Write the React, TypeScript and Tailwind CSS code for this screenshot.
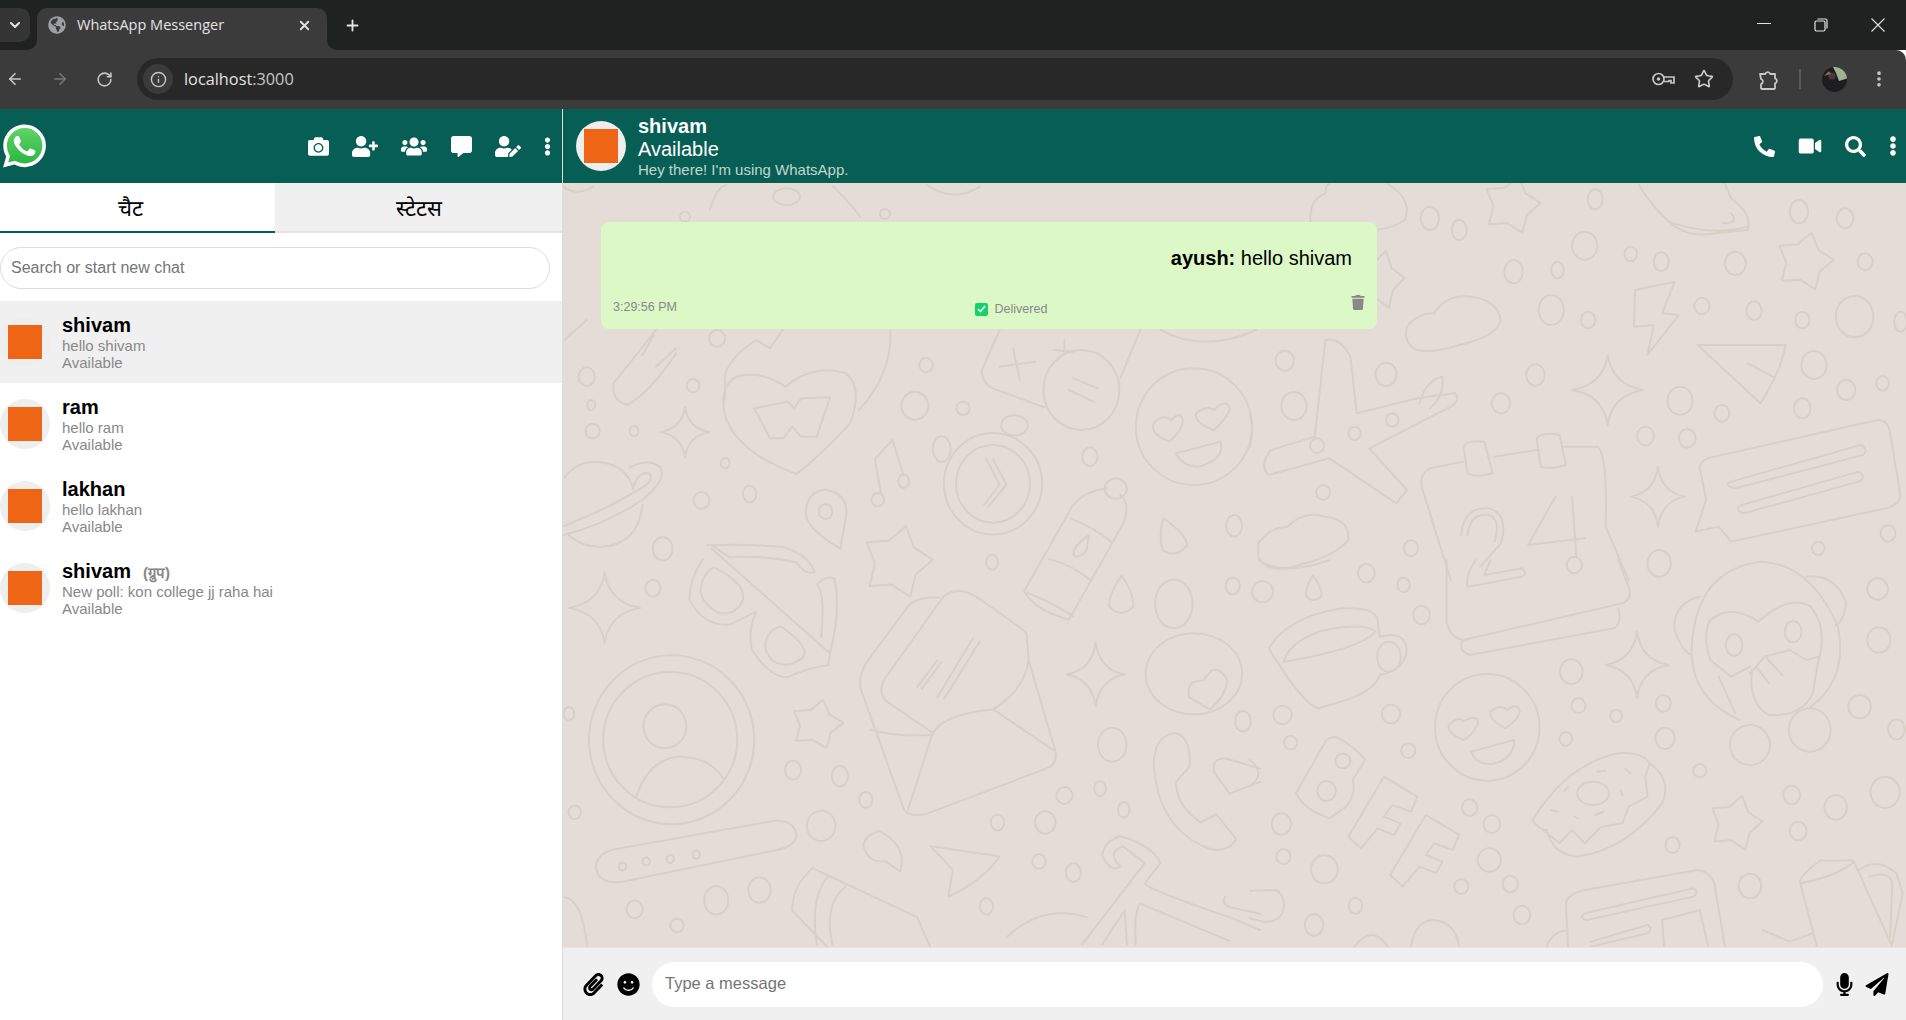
import React from "react";
import {
  FaCamera, FaUserPlus, FaUsers, FaCommentAlt, FaUserEdit, FaEllipsisV, FaPhoneAlt, FaVideo, FaSearch,
  FaPaperclip, FaSmile, FaMicrophone, FaPaperPlane, FaTrash, FaGlobeAmericas,
} from "react-icons/fa";
import { ChevronDown, X, Plus, ArrowLeft, ArrowRight, RotateCw, Info, Star, EllipsisVertical } from "lucide-react";

const sparkle = (x: number, y: number, rx: number, ry: number) =>
  `M${x} ${y - ry}Q${x + rx * 0.12} ${y - ry * 0.15} ${x + rx} ${y}Q${x + rx * 0.12} ${y + ry * 0.15} ${x} ${y + ry}Q${x - rx * 0.12} ${y + ry * 0.15} ${x - rx} ${y}Q${x - rx * 0.12} ${y - ry * 0.15} ${x} ${y - ry}Z`;

const star = (x: number, y: number, rx: number, ry: number) => {
  let d = "";
  for (let i = 0; i < 10; i++) {
    const r = i % 2 === 0 ? 1 : 0.62;
    const a = -Math.PI / 2 + 0.25 + (i * Math.PI) / 5;
    d += `${i === 0 ? "M" : "L"}${(x + Math.cos(a) * rx * r).toFixed(1)} ${(y + Math.sin(a) * ry * r).toFixed(1)}`;
  }
  return d + "Z";
};

type Group = { t: string; paths: string[]; dots: number[][] };

const groups: Group[] = [
  {
    t: "translate(560 400) scale(.4464 .338)",
    paths: [
      sparkle(280, 95, 55, 75), sparkle(100, 615, 80, 105), sparkle(1200, 812, 65, 95),
      star(755, 480, 80, 110), star(575, 960, 60, 75),
      "M10 230Q40 175 95 185Q150 195 165 265M155 200Q200 170 225 200Q240 235 185 295Q100 370 5 400M5 375Q110 320 190 255Q215 225 195 215Q175 215 165 255M185 310Q175 430 90 435Q50 435 20 400",
      "M330 430Q420 425 500 435Q560 460 570 510Q550 520 530 480Q460 460 380 465L340 430ZM320 470Q290 530 290 590Q320 670 380 665Q420 640 440 625Q420 680 430 740Q470 820 510 820Q560 790 600 785L605 750L340 440",
      "M345 495Q415 540 410 590Q395 640 355 630Q315 600 315 560Q320 510 345 495ZM495 670Q560 730 545 760Q510 800 475 770Q450 730 465 700Q475 675 495 670ZM575 545Q600 515 615 530Q630 620 605 750M575 545Q595 570 585 700",
      "M172 1170Q200 1060 270 1055Q340 1060 365 1120",
      "M850 585Q800 580 780 610L690 770Q665 820 675 860L770 1210Q780 1235 820 1225L1090 1090Q1115 1075 1110 1040L1050 770L1045 690Q1040 680 930 580Q890 550 860 580L730 820Q710 860 730 890L835 985Q860 930 970 915L1110 1040M835 985L780 1210M835 990Q760 1000 695 975M970 915Q1040 860 1050 770",
      "M925 705L845 880M940 715L860 885M845 770L800 850M855 775L810 855",
      "M955 175L985 250L950 310M970 175L1000 250L960 315",
      "M705 175L745 118L770 225M705 175L720 280",
      "M595 265Q650 280 640 350L628 440Q550 380 550 330Q555 270 595 265Z",
      "M1225 262Q1170 270 1145 320L1040 565Q1060 620 1140 650L1260 370Q1280 310 1255 280M1145 350Q1200 380 1235 420M1095 470Q1150 490 1190 535M1045 570Q1090 590 1150 640M1185 400Q1150 430 1150 460Q1170 470 1180 440Z",
      "M1352 350Q1405 400 1405 430Q1380 470 1350 445Q1340 400 1352 350ZM1258 520Q1285 570 1285 610Q1255 650 1230 610Q1230 570 1258 520Z",
      "M1440 830Q1400 830 1410 880L1455 915Q1490 880 1495 830Q1480 790 1460 800Z",
      "M1380 985Q1330 990 1330 1080Q1340 1260 1440 1320Q1490 1350 1515 1300L1470 1225L1435 1250Q1380 1200 1380 1130L1410 1085Q1415 1000 1380 985Z",
      "M1490 1060Q1460 1060 1465 1100L1500 1165L1568 1130M1490 1060L1568 1090",
      "M80 1380Q85 1340 120 1330L480 1245Q525 1240 530 1290Q525 1320 490 1330L140 1425Q85 1435 80 1380Z",
      "M715 1275Q680 1290 680 1320Q690 1370 730 1365L762 1395Q780 1320 715 1275Z",
      "M830 1320L985 1350Q950 1420 870 1470L880 1390Z",
      "M565 1385L800 1530L830 1620M565 1385Q520 1440 520 1510L600 1620M600 1410Q560 1470 575 1610M640 1440Q590 1490 610 1610",
      "M1000 1590Q1080 1490 1180 1530M1255 1290Q1215 1310 1215 1350Q1235 1400 1255 1380Q1225 1340 1260 1320L1310 1370L1170 1610M1255 1290Q1330 1320 1345 1370L1310 1430Q1320 1450 1500 1530L1568 1568",
      "M1490 1470Q1480 1490 1500 1500L1568 1520M1300 1490L1500 1600M1300 1490Q1285 1510 1290 1610M1215 1610L1265 1510L1270 1610",
      "M10 1470Q50 1480 60 1610",
    ],
    dots: [
      [73, 92, 16, 22], [166, 92, 10, 15], [370, 187, 10, 15], [317, 297, 18, 25], [425, 278, 15, 25], [230, 440, 22, 35], [208, 557, 17, 25], [968, 480, 13, 22], [1187, 168, 17, 28], [1510, 372, 18, 32], [1507, 550, 16, 25], [1375, 603, 42, 72], [1237, 1020, 32, 50], [1530, 950, 18, 30], [522, 1095, 18, 28], [627, 1113, 18, 30], [685, 1183, 15, 23], [585, 1260, 32, 45], [980, 1250, 15, 24], [1087, 1250, 23, 33], [1130, 1170, 18, 25], [1210, 1150, 13, 22], [1263, 1212, 13, 23], [1073, 1365, 15, 22], [1150, 1398, 17, 28], [955, 1498, 15, 24], [350, 1480, 27, 42], [447, 1450, 25, 38], [167, 1507, 18, 26], [262, 1555, 15, 20], [33, 1220, 14, 20], [20, 928, 12, 20],
      [250, 1005, 185, 250], [247, 1005, 150, 200], [235, 965, 48, 65], [970, 248, 110, 150], [970, 248, 83, 115], [1018, 75, 30, 30], [855, 145, 20, 38], [712, 295, 14, 20], [770, 240, 12, 20], [595, 330, 15, 22], [1245, 262, 25, 30], [1420, 810, 108, 120], [140, 1380, 8, 12], [193, 1365, 8, 12], [247, 1358, 8, 12], [305, 1345, 8, 12],
    ],
  },
  {
    t: "translate(560 320) scale(.4464 .3333)",
    paths: [
      "M370 240L370 160Q390 100 440 60L470 85L500 28M740 30Q745 160 670 270",
      "M505 200Q450 150 395 170Q355 200 370 290Q400 400 530 462Q580 410 650 310Q680 200 640 160Q570 130 505 200Z",
      "M435 265L510 245L525 265L540 235L605 232L575 350L540 350L520 320L500 355L470 355Z",
      "M215 30L120 190Q115 240 150 255Q200 220 260 100M210 45L185 105M260 85L215 140",
      "M985 30L945 150Q945 190 970 205L1085 262M1300 30L1255 175M1015 85L1030 180M985 140L1065 125M1130 60L1130 100M1105 90L1150 95M1150 175L1205 205M1140 210L1195 245",
      "M1330 310Q1350 280 1370 300Q1390 270 1395 300Q1395 330 1365 365Q1320 340 1330 310ZM1425 280Q1450 255 1465 270Q1495 230 1500 270Q1490 300 1465 330Q1420 310 1425 280ZM1380 400L1480 365Q1490 420 1430 440Q1395 440 1380 400Z",
      "M1345 30Q1440 100 1560 30M60 0L10 60",
    ],
    dots: [[60, 170, 18, 28], [298, 197, 14, 20], [820, 135, 15, 22], [795, 257, 30, 42], [903, 265, 15, 20], [70, 255, 9, 15], [352, 55, 18, 25], [1168, 210, 85, 120], [1420, 320, 130, 175]],
  },
  {
    t: "translate(560 100) scale(.3333 .3333)",
    paths: ["M10 260Q50 290 100 260M450 330Q470 260 500 255M820 260Q880 320 900 350M1100 255Q1180 310 1260 260"],
    dots: [[680, 290, 40, 25], [975, 342, 15, 15], [375, 350, 15, 15]],
  },
  {
    t: "translate(1250 180) scale(.4184 .3333)",
    paths: [
      sparkle(855, 630, 85, 105), sparkle(975, 950, 65, 90), star(625, 75, 70, 90), star(1325, 245, 70, 90), star(310, 300, 60, 90),
      "M145 125Q140 60 180 40Q180 15 190 12M330 12Q390 60 370 120Q340 145 300 150",
      "M930 15Q960 80 1005 130Q1050 175 1110 160L1190 150Q1200 100 1150 55L1135 12M1000 125Q1100 170 1190 140M1150 100Q1170 130 1130 130",
      "M920 330L1015 305L985 400L1025 405L950 525L965 435L918 440Z",
      "M375 440Q400 400 440 400Q470 340 530 350Q590 360 600 420Q590 470 500 495Q440 520 400 510Q365 490 375 440Z",
      "M20 1090Q50 1040 90 1040Q130 990 180 1010Q240 1020 235 1080Q200 1130 130 1150Q40 1190 20 1130Z",
      "M1070 495L1280 495Q1270 570 1220 670ZM1190 550L1250 590",
      "M180 480Q215 470 240 530L255 700L400 655L490 640Q505 660 480 680L285 805L375 930L350 970L190 835L45 885Q20 860 50 810L155 770L180 480ZM405 670Q420 600 460 590Q465 650 430 685",
      "M510 845L430 865Q405 880 410 920L480 1200M585 830L685 810M750 800L830 800Q855 820 850 1040L905 1200M510 800Q515 780 560 785L580 880Q540 895 520 880ZM685 775Q700 755 740 765L755 855Q720 870 695 860Z",
      "M505 1065Q510 980 570 985Q620 1000 600 1090L550 1160M730 950L665 1095L800 1075M770 950L780 1130M520 1065Q525 1000 570 1005Q600 1015 585 1085",
      "M1110 830L1500 720Q1525 720 1530 760L1555 950Q1550 975 1520 985L1150 1085L1120 1040L1065 1055L1090 960L1075 860Q1080 835 1110 830ZM1150 905L1460 795Q1480 810 1465 825L1160 925Q1130 915 1150 905ZM1175 975L1455 875Q1475 890 1455 905L1180 1000Q1155 990 1175 975Z",
      "M0 700Q10 750 0 800",
    ],
    dots: [
      [430, 115, 22, 35], [500, 150, 18, 30], [825, 58, 18, 30], [1312, 95, 22, 35], [1422, 115, 20, 30], [630, 275, 22, 35], [735, 270, 15, 25], [800, 197, 30, 42], [910, 222, 15, 22], [983, 245, 18, 28], [1160, 250, 25, 35], [1470, 245, 18, 25], [1445, 410, 45, 62], [720, 390, 30, 45], [808, 420, 17, 25], [1080, 378, 18, 25], [1205, 392, 18, 28], [1320, 420, 17, 25], [1348, 555, 30, 42], [1425, 630, 22, 30], [1512, 610, 15, 22], [1320, 685, 20, 30], [1128, 700, 18, 25], [1028, 662, 30, 42], [945, 768, 20, 28], [1045, 775, 20, 28], [682, 585, 22, 32], [600, 670, 22, 30], [325, 583, 25, 35], [83, 542, 22, 30], [105, 678, 30, 42], [340, 720, 15, 20], [250, 760, 15, 20], [160, 797, 17, 22], [175, 937, 17, 22], [385, 1105, 17, 24], [1525, 1060, 18, 25], [1358, 1105, 15, 20], [978, 1150, 28, 40], [1555, 425, 15, 30],
    ],
  },
  {
    t: "translate(1250 560) scale(.4184 .3333)",
    paths: [
      sparkle(925, 315, 75, 100), star(1160, 790, 65, 85),
      "M470 0L470 190Q480 235 510 240L890 130Q915 115 905 80L880 0M510 240Q495 270 525 285L870 205Q890 190 880 145M540 0Q515 40 520 80L650 50Q665 40 650 25L560 45L575 0",
      "M45 265Q90 170 220 145Q300 140 305 180L310 230Q370 210 375 270Q370 330 310 345Q300 390 230 420L165 445Q130 440 45 265ZM80 305Q100 230 200 205Q280 190 300 215Q260 270 80 305Z",
      "M475 495Q500 465 510 485Q545 460 545 490Q530 530 510 540Q470 520 475 495ZM575 455Q600 430 615 450Q640 425 645 455Q640 480 610 505Q570 480 575 455ZM528 575L632 540Q630 600 580 612Q540 615 528 575Z",
      "M1170 480Q1060 420 1055 280Q1060 30 1220 5Q1340 10 1405 200Q1430 360 1340 440M1075 110Q1010 130 1015 210Q1030 270 1055 285M1330 50Q1400 40 1425 130Q1420 180 1400 195",
      "M1215 185Q1150 130 1100 180Q1080 230 1100 300L1150 350L1195 320M1215 185Q1290 100 1340 140Q1380 200 1360 300M1120 350L1160 460M1200 330Q1190 430 1240 465Q1320 470 1345 400L1360 290L1330 300L1290 270L1230 290L1195 340M1210 320L1240 370M1235 295L1272 345",
      "M955 610Q940 575 880 580Q760 610 675 780Q690 810 710 810Q720 880 780 890Q900 870 985 730Q1010 660 955 610ZM700 810L740 850L770 810L800 850L840 800L890 790L905 740L950 710L945 650L955 610M830 635L850 632M895 625L910 640M760 680L750 695M885 690L890 705M720 750L735 755M775 770L785 775M825 765L845 755",
      "M150 45Q175 90 170 110Q150 130 135 110Q130 90 150 45Z",
      "M205 530Q250 560 275 600L245 660Q255 700 230 740L190 775Q130 750 110 700L180 545Q190 530 205 530Z",
      "M320 650L400 710L385 755L340 735L320 770L360 790L345 825L305 805L265 865L235 830ZM420 765L500 825L485 870L440 850L420 885L460 905L445 940L405 920L365 980L335 945Z",
      "M760 1160L755 1030Q760 1000 800 990L1070 930Q1100 935 1110 970L1135 1160M800 1060L1060 985Q1075 995 1060 1010L805 1080Q785 1075 800 1060ZM815 1145L950 1095Q965 1105 950 1120L815 1160M990 1160L985 1080L1075 1050L1095 1160M710 1160Q720 1115 760 1110",
      "M1315 970Q1310 950 1365 900Q1370 905 1440 900L1445 910L1535 1160M1315 970L1355 1160M1315 970Q1400 950 1445 905M1455 930Q1500 890 1545 940L1560 1000L1535 1150M1480 950Q1530 930 1535 970L1530 1130M1225 1110L1290 1145L1345 1120",
      "M0 992L60 990Q85 1000 80 1050Q70 1090 30 1085L0 1075M385 1160Q395 1080 440 1080Q490 1085 500 1160M250 1160Q290 1090 330 1160M0 600Q30 630 15 660L0 680M20 0Q80 50 190 0",
    ],
    dots: [
      [30, 95, 25, 32], [278, 40, 20, 28], [367, 75, 15, 22], [410, 165, 20, 28], [78, 465, 22, 28], [337, 462, 22, 28], [97, 548, 16, 20], [378, 572, 17, 22], [75, 792, 23, 32], [80, 890, 17, 22], [178, 928, 32, 42], [252, 1037, 16, 24], [153, 1095, 22, 32], [525, 743, 18, 25], [578, 793, 20, 27], [572, 900, 28, 35], [505, 980, 17, 22], [622, 972, 18, 25], [650, 1065, 20, 28], [768, 335, 27, 37], [785, 437, 17, 22], [875, 468, 14, 18], [988, 430, 18, 25], [755, 537, 15, 20], [992, 535, 23, 32], [1075, 632, 16, 20], [1010, 855, 17, 24], [1295, 705, 20, 28], [1400, 742, 27, 37], [1518, 697, 35, 47], [1310, 813, 20, 28], [1195, 978, 27, 37], [1500, 87, 25, 32], [1503, 240, 28, 38], [1457, 440, 27, 35], [1545, 508, 20, 30], [775, 15, 18, 25],
      [332, 290, 28, 45], [567, 502, 125, 160], [1157, 255, 20, 32], [1298, 215, 20, 32], [1195, 555, 48, 60], [1338, 510, 50, 65], [820, 700, 38, 35], [222, 603, 18, 22], [183, 693, 22, 30],
    ],
  },
];

function Doodles() {
  return (
    <svg
      className="absolute inset-0 h-full w-full blur-[0.5px]"
      viewBox="563 183 1343 764"
      preserveAspectRatio="none"
      fill="none"
      stroke="#d8d0c7"
      strokeWidth="2"
      strokeLinejoin="round"
      strokeLinecap="round"
    >
      {groups.map((g, i) => (
        <g key={i} transform={g.t}>
          {g.paths.map((d, j) => (
            <path key={j} d={d} vectorEffect="non-scaling-stroke" />
          ))}
          {g.dots.map((e, j) => (
            <ellipse key={j} cx={e[0]} cy={e[1]} rx={e[2]} ry={e[3]} vectorEffect="non-scaling-stroke" />
          ))}
        </g>
      ))}
    </svg>
  );
}

function WaLogo() {
  return (
    <svg viewBox="0 0 24 24" className="h-[44px] w-[43px]">
      <defs>
        <linearGradient id="wa" x1="0" y1="0" x2="0" y2="1">
          <stop offset="0" stopColor="#5fd568" />
          <stop offset="1" stopColor="#28b53f" />
        </linearGradient>
      </defs>
      <path d="M12 1.8a10.2 10.2 0 0 0-8.8 15.4L1.6 22.6l5.6-1.5A10.2 10.2 0 1 0 12 1.8z" fill="url(#wa)" />
      <path
        fill="#fff"
        d="M17.472 14.382c-.297-.149-1.758-.867-2.03-.967-.273-.099-.471-.148-.67.15-.197.297-.767.966-.94 1.164-.173.199-.347.223-.644.075-.297-.15-1.255-.463-2.39-1.475-.883-.788-1.48-1.761-1.653-2.059-.173-.297-.018-.458.13-.606.134-.133.298-.347.446-.52.149-.174.198-.298.298-.497.099-.198.05-.371-.025-.52-.075-.149-.669-1.612-.916-2.207-.242-.579-.487-.5-.669-.51-.173-.008-.371-.01-.57-.01-.198 0-.52.074-.792.372-.272.297-1.04 1.016-1.04 2.479 0 1.462 1.065 2.875 1.213 3.074.149.198 2.096 3.2 5.077 4.487.709.306 1.262.489 1.694.625.712.227 1.36.195 1.871.118.571-.085 1.758-.719 2.006-1.413.248-.694.248-1.289.173-1.413-.074-.124-.272-.198-.57-.347m-5.421 7.403h-.004a9.87 9.87 0 01-5.031-1.378l-.361-.214-3.741.982.998-3.648-.235-.374a9.86 9.86 0 01-1.51-5.26c.001-5.45 4.436-9.884 9.888-9.884 2.64 0 5.122 1.03 6.988 2.898a9.825 9.825 0 012.893 6.994c-.003 5.45-4.437 9.884-9.885 9.884m8.413-18.297A11.815 11.815 0 0012.05 0C5.495 0 .16 5.335.157 11.892c0 2.096.547 4.142 1.588 5.945L.057 24l6.305-1.654a11.882 11.882 0 005.683 1.448h.005c6.554 0 11.89-5.335 11.893-11.893a11.821 11.821 0 00-3.48-8.413z"
      />
    </svg>
  );
}

function BrowserChrome() {
  return (
    <div className="shrink-0 font-['Open_Sans','Noto_Sans',sans-serif]">
      <div className="flex h-[50px] items-end bg-[#202121] text-[#e3e3e3]">
        <div className="mb-[8px] flex h-[34px] w-[30px] items-center justify-center rounded-r-[10px] bg-[#353535]">
          <ChevronDown size={16} strokeWidth={3} />
        </div>
        <div className="relative ml-[7px] flex h-[42px] w-[290px] items-center rounded-t-[10px] bg-[#3b3b3b] pb-[8px] pl-[11px] pr-[15px]">
          <FaGlobeAmericas className="h-[18px] w-[18px] shrink-0 text-[#9aa0a6]" />
          <span className="ml-[11px] flex-1 text-[14.5px] leading-none">WhatsApp Messenger</span>
          <X size={15} strokeWidth={3} />
          <svg className="absolute -right-[10px] bottom-0" width="10" height="10" viewBox="0 0 10 10">
            <path d="M0 0A10 10 0 0 0 10 10H0z" fill="#3b3b3b" />
          </svg>
          <svg className="absolute -left-[10px] bottom-0" width="10" height="10" viewBox="0 0 10 10">
            <path d="M10 0A10 10 0 0 1 0 10H10z" fill="#3b3b3b" />
          </svg>
        </div>
        <div className="ml-[17px] flex flex-1 items-center self-stretch">
          <Plus size={17} strokeWidth={2.6} />
          <div className="ml-auto flex items-center gap-[43px] pr-[21px]">
            <svg width="14" height="14" viewBox="0 0 14 14" stroke="#e3e3e3" fill="none">
              <path d="M0 5.5h14" />
            </svg>
            <svg width="14" height="14" viewBox="0 0 14 14" stroke="#e3e3e3" fill="none" strokeWidth="1.2">
              <rect x="1" y="3" width="10" height="10" rx="1.5" />
              <path d="M3.5 1h8a1.5 1.5 0 0 1 1.5 1.5v8" />
            </svg>
            <svg width="14" height="14" viewBox="0 0 14 14" stroke="#e3e3e3" fill="none" strokeWidth="1.1">
              <path d="M.5.5l13 13M13.5.5l-13 13" />
            </svg>
          </div>
        </div>
      </div>
      <div className="flex h-[59px] items-center rounded-tr-[10px] bg-[#3b3b3b] pb-[1px] text-[#c7c7c7]">
        <div className="flex w-[137px] items-center pl-[6px]">
          <ArrowLeft size={18} strokeWidth={2.2} />
          <ArrowRight size={18} strokeWidth={2.2} className="ml-[27px] text-[#777]" />
          <RotateCw size={17} strokeWidth={2.2} className="ml-[27px]" />
        </div>
        <div className="flex h-[42px] w-[1596px] items-center rounded-full bg-[#282828] pl-[6px] pr-[19px]">
          <div className="flex h-[30px] w-[30px] items-center justify-center rounded-full bg-[#3b3b3b]">
            <Info size={17} strokeWidth={2} />
          </div>
          <span className="ml-[11px] text-[16.3px] leading-none text-[#e3e3e3]">localhost<span className="text-[#c7c7c7]">:3000</span></span>
          <svg className="ml-auto" width="23" height="14" viewBox="0 0 23 14" fill="none" stroke="#c7c7c7" strokeWidth="1.7">
            <circle cx="6.5" cy="7" r="5.5" />
            <circle cx="6.5" cy="7" r="1.8" fill="#c7c7c7" stroke="none" />
            <path d="M12 5h10v6h-3V8.5h-2V9.5h-5" />
          </svg>
          <Star size={20} strokeWidth={2} className="ml-[19px]" />
        </div>
        <svg className="ml-[25px]" width="21" height="21" viewBox="0 0 21 21" fill="none" stroke="#c7c7c7" strokeWidth="1.8" strokeLinejoin="round">
          <path d="M2 5h5.2a2.6 2.6 0 0 1 5 0H17v4.4a2.6 2.6 0 0 1 0 5V19a1 1 0 0 1-1 1H4a1 1 0 0 1-1-1v-4a2.6 2.6 0 0 0 0-5z" />
        </svg>
        <div className="ml-[20px] h-[20px] w-[2px] bg-[#5a5a5a]" />
        <svg className="ml-[21px]" width="25" height="25" viewBox="0 0 25 25">
          <circle cx="12.5" cy="12.5" r="12.5" fill="#1d1d1f" />
          <path d="M11 0.1A12.5 12.5 0 0 1 25 11.5L17 14 14 6z" fill="#9db394" />
          <circle cx="10" cy="9" r="3.6" fill="#4a3a36" />
          <path d="M2 9l5-5 2 3z" fill="#8a6a5e" />
        </svg>
        <EllipsisVertical size={20} strokeWidth={2.4} className="ml-[22px]" />
      </div>
    </div>
  );
}

function Avatar() {
  return (
    <div className="flex h-[50px] w-[50px] shrink-0 items-center justify-center rounded-full bg-[#eeeeee]">
      <div className="h-[34px] w-[34px] bg-[#ef6516]" />
    </div>
  );
}

const chats = [
  { name: "shivam", msg: "hello shivam", active: true },
  { name: "ram", msg: "hello ram" },
  { name: "lakhan", msg: "hello lakhan" },
  { name: "shivam", msg: "New poll: kon college jj raha hai", group: true },
];

function Sidebar() {
  return (
    <div className="flex w-[563px] shrink-0 flex-col border-r border-[#dddddd] bg-white">
      <div className="flex h-[74px] items-center justify-between bg-[#075e55] pl-[3px] pr-[11px] text-white">
        <WaLogo />
        <div className="flex items-center gap-[23px] text-[20px]">
          <FaCamera className="h-[21px] w-[21px]" />
          <FaUserPlus className="h-[21px] w-[26px]" />
          <FaUsers className="mr-[1px] h-[21px] w-[26px]" />
          <FaCommentAlt className="h-[21px] w-[21px]" />
          <FaUserEdit className="h-[21px] w-[26px]" />
          <FaEllipsisV className="h-[19px] w-[7px]" />
        </div>
      </div>
      <div className="flex h-[50px] border-b-2 border-[#e4e4e4] text-[22px] text-black">
        <div className="-mb-[2px] flex w-[275px] items-center justify-center border-b-2 border-[#075e55] pr-[14px] pt-[2px]">चैट</div>
        <div className="flex flex-1 items-center justify-center bg-[#f0f0f0] pt-[2px]">स्टेटस</div>
      </div>
      <div className="pb-[12px] pr-[12px] pt-[14px]">
        <div className="flex h-[42px] items-center rounded-full border border-[#dddddd] pl-[10px] text-[16px] text-[#757575]">
          Search or start new chat
        </div>
      </div>
      {chats.map((c, i) => (
        <div key={i} className={`flex h-[82px] items-center ${c.active ? "bg-[#f0f0f0]" : ""}`}>
          <Avatar />
          <div className="ml-[12px]">
            <div className="flex h-[24px] items-baseline text-[20px] font-bold leading-[24px] text-black">
              {c.name}
              {c.group && <span className="ml-[12px] text-[15px] leading-none text-[#888888]">(ग्रुप)</span>}
            </div>
            <div className="text-[15px] leading-[17px] text-[#888888]">{c.msg}</div>
            <div className="text-[15px] leading-[17px] text-[#888888]">Available</div>
          </div>
        </div>
      ))}
    </div>
  );
}

function ChatPane() {
  return (
    <div className="flex min-w-0 flex-1 flex-col">
      <div className="flex h-[74px] shrink-0 items-center bg-[#075e55] pl-[13px] pr-[9px] text-white">
        <Avatar />
        <div className="ml-[12px] mt-[2px] flex-1">
          <div className="text-[20px] font-bold leading-[22px]">shivam</div>
          <div className="text-[20px] leading-[24px]">Available</div>
          <div className="text-[15px] leading-[18px] text-[#c3d6d2]">Hey there! I'm using WhatsApp.</div>
        </div>
        <div className="flex items-center gap-[23px]">
          <FaPhoneAlt className="h-[21px] w-[21px]" />
          <FaVideo className="h-[20px] w-[24px]" />
          <FaSearch className="h-[21px] w-[21px]" />
          <FaEllipsisV className="h-[20px] w-[8px]" />
        </div>
      </div>
      <div className="relative min-h-0 flex-1 overflow-hidden bg-[#e4ddd7] pl-[38px] pt-[39px]">
        <Doodles />
        <div className="relative flex h-[107px] w-[776px] flex-col rounded-[8px] bg-[#dcf8c6] px-[12px] pb-[9px]">
          <div className="pr-[13px] pt-[24px] text-right text-[20px] leading-[24px] text-black">
            <b>ayush:</b> hello shivam
          </div>
          <div className="mt-auto flex items-end justify-between text-[12.5px] leading-[14px] text-[#888888]">
            <span className="mb-[6px]">3:29:56 PM</span>
            <span className="mb-[4px] mr-[6px] flex items-center gap-[7px]">
              <span className="flex h-[13px] w-[13px] items-center justify-center rounded-[2px] bg-[#16d168]">
                <svg width="9" height="8" viewBox="0 0 9 8" fill="none" stroke="#fff" strokeWidth="1.6">
                  <path d="M1 4l2.5 2.5L8 1" />
                </svg>
              </span>
              Delivered
            </span>
            <FaTrash className="mb-[10px] h-[15px] w-[14px]" />
          </div>
        </div>
      </div>
      <div className="flex h-[73px] shrink-0 items-center border-t border-[#e4e4e4] bg-[#f0f0f0] pl-[20px] pr-[17px] text-black">
        <FaPaperclip className="h-[23px] w-[21px]" />
        <FaSmile className="ml-[13px] h-[23px] w-[23px]" />
        <div className="ml-[12px] flex h-[45px] flex-1 items-center rounded-full bg-white pb-[2px] pl-[13px] text-[16.5px] text-[#757575]">
          Type a message
        </div>
        <FaMicrophone className="ml-[13px] h-[23px] w-[17px]" />
        <FaPaperPlane className="ml-[12px] h-[23px] w-[24px]" />
      </div>
    </div>
  );
}

export default function App() {
  return (
    <div className="flex h-[1020px] w-[1906px] flex-col overflow-hidden bg-white font-['Liberation_Sans','Noto_Sans_CJK_SC',sans-serif]">
      <BrowserChrome />
      <div className="flex min-h-0 flex-1">
        <Sidebar />
        <ChatPane />
      </div>
    </div>
  );
}
